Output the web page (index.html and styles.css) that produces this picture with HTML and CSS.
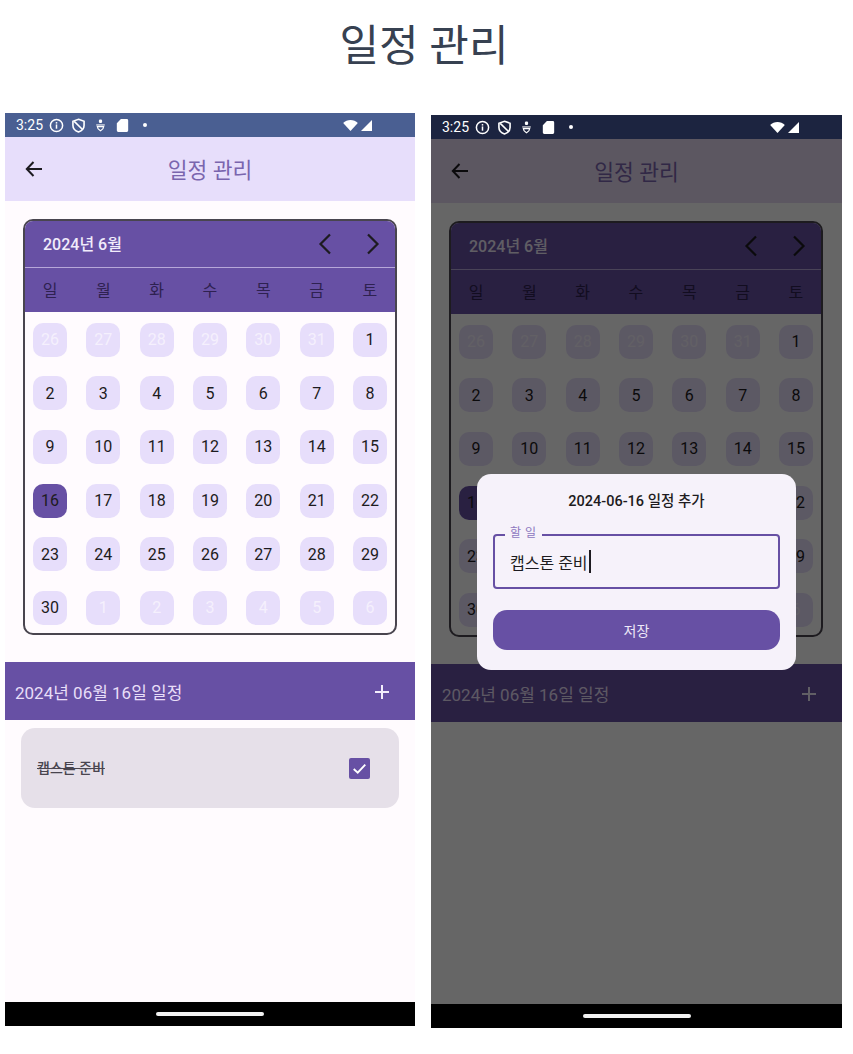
FILE: index.html
```html
<!DOCTYPE html>
<html lang="ko">
<head>
<meta charset="utf-8">
<title>일정 관리</title>
<link rel="stylesheet" href="styles.css">
</head>
<body>
<svg class="defs" width="0" height="0" aria-hidden="true">
  <symbol id="i-info" viewBox="0 0 14 14"><circle cx="7" cy="7" r="5.7" fill="none" stroke="currentColor" stroke-width="1.4"/><rect x="6.3" y="6" width="1.4" height="4" fill="currentColor"/><rect x="6.3" y="3.8" width="1.4" height="1.4" fill="currentColor"/></symbol>
  <symbol id="i-shield" viewBox="0 0 14 14"><path d="M7 1.2 12.2 3v4c0 3-2.200 5-5.200 6C4 12 1.800 10 1.800 7V3Z" fill="none" stroke="currentColor" stroke-width="1.500"/><path d="M3 3.200 11 11" stroke="currentColor" stroke-width="1.500"/></symbol>
  <symbol id="i-usb" viewBox="0 0 14 14"><rect x="5.500" y="1.500" width="3" height="3.200" rx="1.100" fill="currentColor"/><path d="M3 6.500h8" stroke="currentColor" stroke-width="1"/><path d="M4 8c0 2.200 1.700 3.200 3 4 1.300-.8 3-1.800 3-4Z" fill="none" stroke="currentColor" stroke-width="1.100"/></symbol>
  <symbol id="i-sd" viewBox="0 0 14 14"><path d="M5.500 1H11a1.300 1.300 0 0 1 1.300 1.300v9.400A1.300 1.300 0 0 1 11 13H3a1.300 1.300 0 0 1-1.300-1.300V4.800Z" fill="currentColor"/></symbol>
  <symbol id="i-back" viewBox="0 0 24 24"><path d="M20 12H5M11.500 5 4.800 12l6.700 7" fill="none" stroke="currentColor" stroke-width="2"/></symbol>
  <symbol id="i-prev" viewBox="0 0 24 24"><path d="M16 2.500 6.500 12l9.500 9.500" fill="none" stroke="currentColor" stroke-width="2.200"/></symbol>
  <symbol id="i-next" viewBox="0 0 24 24"><path d="M8 2.500 17.500 12 8 21.500" fill="none" stroke="currentColor" stroke-width="2.200"/></symbol>
  <symbol id="i-plus" viewBox="0 0 24 24"><path d="M12 5v14M5 12h14" fill="none" stroke="currentColor" stroke-width="2"/></symbol>
  <symbol id="i-wifi" viewBox="0 0 16 12"><path d="M0 3.200C2 1.200 5 0 8 0s6 1.200 8 3.200L8 12Z" fill="currentColor"/></symbol>
  <symbol id="i-signal" viewBox="0 0 12 12"><path d="M12 0V12H0Z" fill="currentColor"/></symbol>
</svg>

<h1 class="page-title">일정 관리</h1>

<main class="phones">
  <section class="phone">
    <div class="status status-light">
      <span class="status-time">3:25</span>
      <svg class="si"><use href="#i-info"/></svg>
      <svg class="si"><use href="#i-shield"/></svg>
      <svg class="si"><use href="#i-usb"/></svg>
      <svg class="si"><use href="#i-sd"/></svg>
      <span class="status-dot"></span>
      <span class="status-fill"></span>
      <svg class="si-wifi"><use href="#i-wifi"/></svg>
      <svg class="si-signal"><use href="#i-signal"/></svg>
    </div>
    <header class="appbar">
      <svg class="back"><use href="#i-back"/></svg>
      <div class="appbar-title">일정 관리</div>
    </header>
    <div class="content">
      <div class="calendar">
        <div class="cal-head">
          <span class="cal-month">2024년 6월</span>
          <span class="cal-nav">
            <svg class="chev"><use href="#i-prev"/></svg>
            <svg class="chev"><use href="#i-next"/></svg>
          </span>
        </div>
        <div class="weekdays"><span>일</span><span>월</span><span>화</span><span>수</span><span>목</span><span>금</span><span>토</span></div>
        <div class="days">
          <span class="day muted">26</span><span class="day muted">27</span><span class="day muted">28</span><span class="day muted">29</span><span class="day muted">30</span><span class="day muted">31</span><span class="day">1</span>
          <span class="day">2</span><span class="day">3</span><span class="day">4</span><span class="day">5</span><span class="day">6</span><span class="day">7</span><span class="day">8</span>
          <span class="day">9</span><span class="day">10</span><span class="day">11</span><span class="day">12</span><span class="day">13</span><span class="day">14</span><span class="day">15</span>
          <span class="day selected">16</span><span class="day">17</span><span class="day">18</span><span class="day">19</span><span class="day">20</span><span class="day">21</span><span class="day">22</span>
          <span class="day">23</span><span class="day">24</span><span class="day">25</span><span class="day">26</span><span class="day">27</span><span class="day">28</span><span class="day">29</span>
          <span class="day">30</span><span class="day muted">1</span><span class="day muted">2</span><span class="day muted">3</span><span class="day muted">4</span><span class="day muted">5</span><span class="day muted">6</span>
        </div>
      </div>
      <div class="section-bar">
        <span>2024년 06월 16일 일정</span>
        <svg class="plus"><use href="#i-plus"/></svg>
      </div>
      <div class="task">
        <span class="task-text">캡스톤 준비</span>
        <span class="checkbox"><svg viewBox="0 0 20 20"><path d="M4.500 10.500 8.300 14 15.500 6.300" fill="none" stroke="#fff" stroke-width="1.800"/></svg></span>
      </div>
    </div>
    <div class="navbar"><span class="pill"></span></div>
  </section>

  <section class="phone phone-dialog">
    <div class="status status-dark">
      <span class="status-time">3:25</span>
      <svg class="si"><use href="#i-info"/></svg>
      <svg class="si"><use href="#i-shield"/></svg>
      <svg class="si"><use href="#i-usb"/></svg>
      <svg class="si"><use href="#i-sd"/></svg>
      <span class="status-dot"></span>
      <span class="status-fill"></span>
      <svg class="si-wifi"><use href="#i-wifi"/></svg>
      <svg class="si-signal"><use href="#i-signal"/></svg>
    </div>
    <header class="appbar">
      <svg class="back"><use href="#i-back"/></svg>
      <div class="appbar-title">일정 관리</div>
    </header>
    <div class="content">
      <div class="calendar">
        <div class="cal-head">
          <span class="cal-month">2024년 6월</span>
          <span class="cal-nav">
            <svg class="chev"><use href="#i-prev"/></svg>
            <svg class="chev"><use href="#i-next"/></svg>
          </span>
        </div>
        <div class="weekdays"><span>일</span><span>월</span><span>화</span><span>수</span><span>목</span><span>금</span><span>토</span></div>
        <div class="days">
          <span class="day muted">26</span><span class="day muted">27</span><span class="day muted">28</span><span class="day muted">29</span><span class="day muted">30</span><span class="day muted">31</span><span class="day">1</span>
          <span class="day">2</span><span class="day">3</span><span class="day">4</span><span class="day">5</span><span class="day">6</span><span class="day">7</span><span class="day">8</span>
          <span class="day">9</span><span class="day">10</span><span class="day">11</span><span class="day">12</span><span class="day">13</span><span class="day">14</span><span class="day">15</span>
          <span class="day selected">16</span><span class="day">17</span><span class="day">18</span><span class="day">19</span><span class="day">20</span><span class="day">21</span><span class="day">22</span>
          <span class="day">23</span><span class="day">24</span><span class="day">25</span><span class="day">26</span><span class="day">27</span><span class="day">28</span><span class="day">29</span>
          <span class="day">30</span><span class="day muted">1</span><span class="day muted">2</span><span class="day muted">3</span><span class="day muted">4</span><span class="day muted">5</span><span class="day muted">6</span>
        </div>
      </div>
      <div class="section-bar">
        <span>2024년 06월 16일 일정</span>
        <svg class="plus"><use href="#i-plus"/></svg>
      </div>
    </div>
    <div class="navbar"><span class="pill"></span></div>

    <div class="scrim"></div>
    <div class="dialog">
      <div class="dialog-title">2024-06-16 일정 추가</div>
      <div class="field">
        <span class="field-label">할 일</span>
        <span class="field-value">캡스톤 준비</span><span class="caret"></span>
      </div>
      <div class="save">저장</div>
    </div>
  </section>
</main>
</body>
</html>
```

FILE: styles.css
```css
* { box-sizing: border-box; }

html, body { margin: 0; padding: 0; }

body {
  width: 853px;
  height: 1054px;
  overflow: hidden;
  background: #fff;
  font-family: Roboto, "Noto Sans CJK KR", sans-serif;
}

.defs { position: absolute; }

.page-title {
  margin: 0;
  height: 90px;
  padding: 14px 5px 0 0;
  text-align: center;
  font-size: 43px;
  line-height: 64px;
  font-weight: 400;
  color: #374151;
}

.phones {
  display: flex;
  gap: 16px;
  align-items: flex-start;
  padding: 23px 0 0 5px;
}

.phone {
  position: relative;
  width: 410px;
  height: 913px;
  display: flex;
  flex-direction: column;
  background: #fffbfe;
  overflow: hidden;
}

.phone-dialog {
  width: 411px;
  margin-top: 2px;
  background: #fff;
}

/* status bar */
.status {
  flex: none;
  height: 24px;
  display: flex;
  align-items: center;
  gap: 7px;
  padding: 0 0 0 11px;
  color: #fff;
}
.status-light { background: #4a5f92; }
.status-dark { background: #1c2440; }
.status-time { font-size: 14px; line-height: 20px; margin-right: -1px; }
.si { width: 15px; height: 15px; flex: none; }
.status-dot { width: 4px; height: 4px; border-radius: 50%; background: #fff; margin: 0 0 0 6px; flex: none; }
.status-fill { flex: 1; }
.si-wifi { width: 15px; height: 11px; flex: none; margin-right: -4px; }
.si-signal { width: 11px; height: 11px; flex: none; margin-right: 43px; }

/* app bar */
.appbar {
  flex: none;
  height: 64px;
  display: flex;
  align-items: center;
  position: relative;
  background: #e7defb;
  padding-left: 17px;
}
.phone-dialog .appbar { background: #e6d9f3; }
.back { width: 24px; height: 24px; color: #1d1b20; flex: none; }
.appbar-title {
  flex: 1;
  text-align: center;
  padding: 4px 41px 0 0;
  font-size: 21.500px;
  line-height: 28px;
  color: #7a65ae;
}

/* calendar */
.content { flex: 1; display: flex; flex-direction: column; padding-top: 18px; }

.calendar {
  width: 374px;
  height: 416px;
  margin-left: 18px;
  border: 2px solid #49454f;
  border-radius: 10px;
  overflow: hidden;
}

.cal-head {
  height: 46px;
  display: flex;
  align-items: center;
  justify-content: space-between;
  padding: 1px 11px 0 18px;
  background: #6750a4;
}
.cal-month { font-size: 16px; font-weight: 500; color: #f1ecfb; line-height: 24px; }
.cal-nav { display: flex; gap: 22px; margin-top: -2px; }
.chev { width: 24px; height: 24px; color: #1d1b20; }

.weekdays {
  height: 45px;
  display: grid;
  grid-template-columns: repeat(7, 34px);
  justify-content: space-between;
  align-items: center;
  padding: 0 8px 2px;
  background: #6750a4;
  border-top: 1px solid #b7a7d9;
  font-size: 16px;
  color: #2e2150;
  text-align: center;
}

.days {
  display: grid;
  grid-template-columns: repeat(7, 34px);
  grid-auto-rows: 34px;
  justify-content: space-between;
  row-gap: 19.700px;
  padding: 10.500px 8px 0;
}

.day {
  display: flex;
  align-items: center;
  justify-content: center;
  border-radius: 10px;
  background: #e7defb;
  color: #1d1b20;
  font-size: 16px;
}
.day.muted { color: #f5f0fd; }
.day.selected { background: #6750a4; }

/* section bar */
.section-bar {
  flex: none;
  height: 58px;
  margin-top: 27px;
  display: flex;
  align-items: center;
  justify-content: space-between;
  padding: 1px 21px 0 10px;
  background: #6750a4;
  color: #e8def8;
  font-size: 17px;
}
.phone-dialog .section-bar { padding-left: 11px; }
.plus { width: 24px; height: 24px; color: #f3eefc; }

.task {
  height: 80px;
  margin: 8px 16px 0;
  display: flex;
  align-items: center;
  justify-content: space-between;
  padding: 0 29px 0 16px;
  background: #e6e0e9;
  border-radius: 14px;
}
.task-text {
  font-size: 14px;
  line-height: 20px;
  font-weight: 500;
  color: #49454f;
  text-decoration: line-through;
}
.checkbox {
  width: 21px;
  height: 21px;
  border-radius: 2px;
  background: #6750a4;
  display: block;
}
.checkbox svg { width: 21px; height: 21px; display: block; }

/* nav bar */
.navbar {
  flex: none;
  height: 24px;
  background: #000;
  display: flex;
  align-items: center;
  justify-content: center;
}
.pill { width: 108px; height: 4px; border-radius: 2px; background: #f2f2f2; }

/* dialog overlay */
.scrim {
  position: absolute;
  left: 0;
  right: 0;
  top: 24px;
  bottom: 24px;
  background: rgba(0, 0, 0, 0.6);
}

.dialog {
  position: absolute;
  left: 46px;
  top: 359px;
  width: 319px;
  height: 196px;
  padding: 18px 16px 0;
  background: #f6f2fa;
  border-radius: 14px;
}
.dialog-title {
  text-align: center;
  font-size: 14.500px;
  line-height: 20px;
  font-weight: 500;
  color: #1d1b20;
}
.field {
  position: relative;
  height: 55px;
  margin-top: 22px;
  display: flex;
  align-items: center;
  padding-left: 15px;
  border: 2px solid #6750a4;
  border-radius: 4px;
}
.field-label {
  position: absolute;
  left: 10px;
  top: -11px;
  padding: 0 5px;
  background: #f6f2fa;
  font-size: 12px;
  line-height: 16px;
  letter-spacing: 0.5px;
  color: #8d78c0;
}
.field-value { font-size: 16px; color: #1d1b20; }
.caret { width: 2px; height: 23px; background: #1d1b20; margin-left: 1px; }
.save {
  height: 40px;
  margin-top: 21px;
  display: flex;
  align-items: center;
  justify-content: center;
  background: #6750a4;
  color: #eee8f8;
  font-size: 14px;
  border-radius: 14px;
}
```
